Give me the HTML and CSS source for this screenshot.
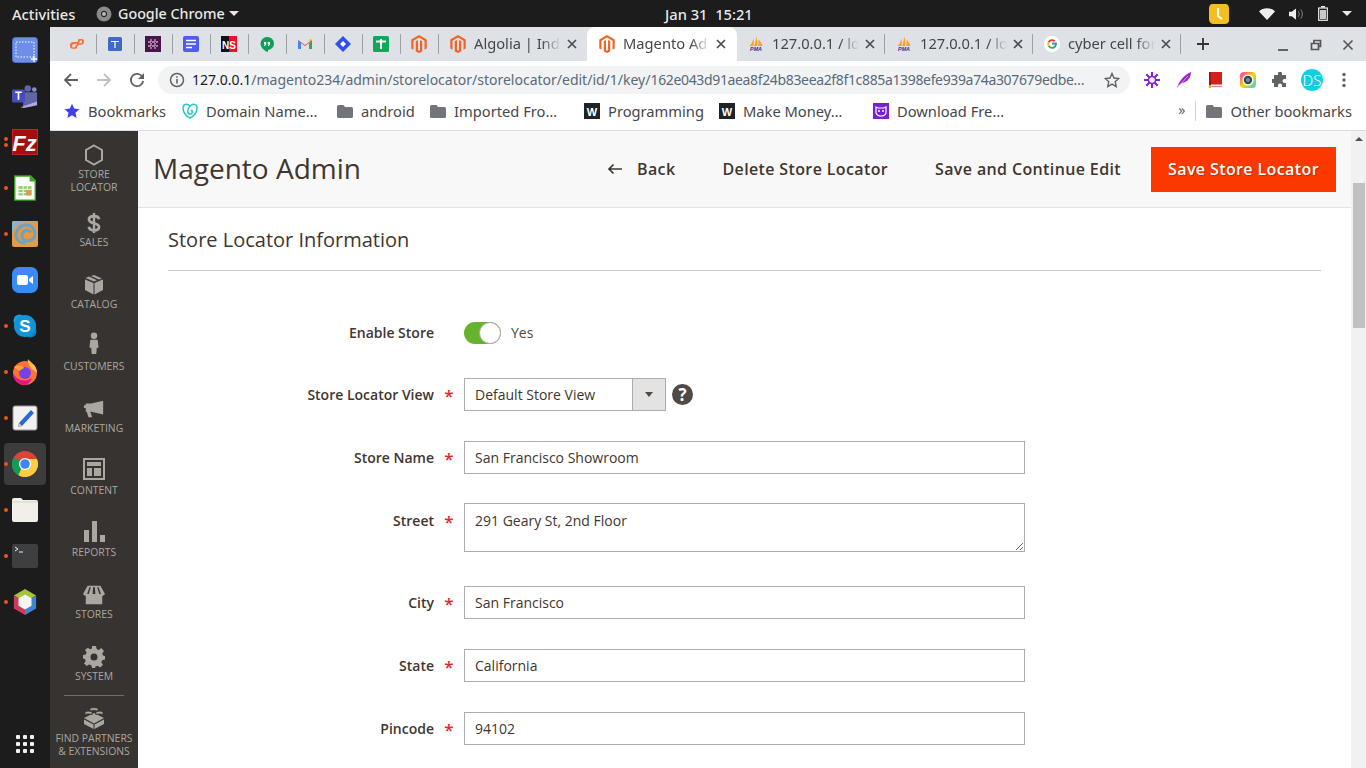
FILE: index.html
```html
<!DOCTYPE html>
<html lang="en">
<head>
<meta charset="utf-8">
<title>Magento Admin</title>
<link rel="stylesheet" href="styles.css">
</head>
<body>
<svg class="defs" width="0" height="0" aria-hidden="true">
  <symbol id="mage" viewBox="0 0 24 28"><path fill="#f26322" d="M12 0 0 7v14l3.400 2V9l8.600-5 8.600 5v14l3.400-2V7z"/><path fill="#f26322" d="M13.600 7.900v15.700L12 24.600l-1.600-1V7.900L7 9.900V25.500l5 2.500 5-2.500V9.900z"/></symbol>
  <symbol id="x" viewBox="0 0 12 12"><path d="M2 2l8 8M10 2l-8 8" stroke="#4a4d51" stroke-width="1.700" fill="none"/></symbol>
  <symbol id="folder" viewBox="0 0 16 14"><path fill="#72767a" d="M1.500 1h5l1.500 2h6.500A1.500 1.500 0 0 1 16 4.500V12.500A1.500 1.500 0 0 1 14.500 14H1.500A1.500 1.500 0 0 1 0 12.500V2.500A1.500 1.500 0 0 1 1.500 1z"/></symbol>
</svg>

<header class="topbar">
  <div class="top-left">
    <span class="activities">Activities</span>
    <svg class="top-chrome" viewBox="0 0 16 16"><circle cx="8" cy="8" r="7.500" fill="#8a8a8a"/><circle cx="8" cy="8" r="3" fill="#1c1c1c"/><circle cx="8" cy="8" r="2" fill="#bbb"/></svg>
    <span class="appname">Google Chrome</span>
    <span class="caret"></span>
  </div>
  <div class="clock">Jan 31&nbsp; 15:21</div>
  <div class="tray">
    <svg class="tray-clock" viewBox="0 0 22 22"><path fill="#f2c01e" d="M5 1h12c3 0 4 2 4 5v11c0 3-2 4-5 4H6c-3 0-5-2-5-5V6c0-3 1-5 4-5z"/><path d="M10 5v8l4 3" stroke="#fff" stroke-width="2" fill="none"/></svg>
    <svg class="tray-wifi" viewBox="0 0 16 12"><path fill="#eee" d="M0 3.500C4-.9 12-.9 16 3.500L8 12z"/></svg>
    <svg class="tray-vol" viewBox="0 0 16 14"><path fill="#eee" d="M0 4.500h3L7.500 1v12L3 9.500H0z"/><path d="M10 4q2 3 0 6M12.500 2q3.500 5 0 10" stroke="#888" fill="none"/></svg>
    <svg class="tray-bat" viewBox="0 0 10 15"><path d="M3 0h4v1.500H3z" fill="#eee"/><rect x=".7" y="2" width="8.600" height="12.300" fill="none" stroke="#eee" stroke-width="1.200"/><rect x="2" y="4" width="6" height="9" fill="#c9c9c9"/></svg>
    <span class="caret"></span>
  </div>
</header>

<div class="desktop">
  <nav class="dock">
    <div class="dock-item"><svg class="dock-icon" viewBox="0 0 26 26"><rect x=".5" y=".5" width="25" height="25" rx="3" fill="#6f8ee8" stroke="#4e6fd0"/><rect x="4" y="5" width="18" height="15" fill="none" stroke="#fff" stroke-dasharray="1.500 1.500"/><path d="M19 22h6M22 19v6" stroke="#fff" stroke-width="1.300"/></svg></div>
    <div class="dock-item"><svg class="dock-icon" viewBox="0 0 28 28"><circle cx="17" cy="6" r="3.500" fill="#6264a7"/><circle cx="24" cy="7" r="2.500" fill="#8b8cc7"/><path d="M12 10h15v11l-5 4-10 1z" fill="#6264a7"/><path d="M9 26l18-6v4l-14 3z" fill="#b6a7e0"/><rect x="0" y="7" width="14" height="14" rx="1.500" fill="#464eb8"/><path d="M3.500 10h7M7 10v8" stroke="#fff" stroke-width="1.800"/></svg></div>
    <div class="dock-item has-dot double-dot"><svg class="dock-icon" viewBox="0 0 26 26"><rect width="26" height="26" fill="#a30f0f"/><rect x=".5" y=".5" width="25" height="25" fill="none" stroke="#e04040" stroke-dasharray="1 1"/><text x="12.500" y="21.500" class="fz-text">Fz</text></svg></div>
    <div class="dock-item has-dot"><svg class="dock-icon" viewBox="0 0 26 28"><path d="M2 1h17l5 5v21H2z" fill="#fff" stroke="#3aa51e" stroke-width="1.500"/><path d="M18 0l7 7h-7z" fill="#3aa51e"/><rect x="6" y="12" width="14" height="10" fill="#8fce7a"/><path d="M6 15.500h14M6 19h14M11 12v10M15.500 12v10" stroke="#fff"/><rect x="14" y="16" width="6" height="6" fill="#d99a4e"/></svg></div>
    <div class="dock-item has-dot"><svg class="dock-icon" viewBox="0 0 26 26"><rect width="26" height="26" rx="2" fill="#e79a46"/><path d="M0 13C2 3 12 0 26 1V0H2Q0 0 0 2z" fill="#8fb3cc"/><path d="M13 22c-7 0-11-6-8-12s11-8 15-4 4 11-1 13-10 0-9-5 6-6 9-3" fill="none" stroke="#6aa2c9" stroke-width="3"/></svg></div>
    <div class="dock-item"><svg class="dock-icon" viewBox="0 0 26 26"><rect width="26" height="26" rx="7" fill="#3a8bf7"/><rect x="5" y="8" width="11" height="10" rx="2" fill="#fff"/><path d="M17 12l4-3v8l-4-3z" fill="#fff"/></svg></div>
    <div class="dock-item has-dot"><svg class="dock-icon" viewBox="0 0 26 26"><circle cx="7.500" cy="7.500" r="6" fill="#1b9ed9"/><circle cx="18.500" cy="18.500" r="6" fill="#0f7fc4"/><circle cx="13" cy="13" r="11" fill="#1394d8"/><text x="13" y="19" class="sk-text">S</text></svg></div>
    <div class="dock-item has-dot"><svg class="dock-icon" viewBox="0 0 26 26"><circle cx="13" cy="14" r="12" fill="#ff7139"/><path d="M13 26a12 12 0 0 1-12-12c3 7 12 10 19 5-2 4-4 7-7 7z" fill="#e31587"/><circle cx="13" cy="14" r="6" fill="#7542e5"/><path d="M16 0c2 3 9 6 9 14l-6-5c-1-3-4-5-3-9z" fill="#ffbd4f"/><path d="M2 8c3-2 8-2 10 1l-5 3z" fill="#ffa436"/></svg></div>
    <div class="dock-item has-dot"><svg class="dock-icon" viewBox="0 0 26 26"><rect x="1" y="1" width="24" height="24" rx="2" fill="#f2f2f2" stroke="#999"/><path d="M7 18L19 5l3 3L10 21l-4 1z" fill="#2a6ad8"/><path d="M6 22l1-4 3 3z" fill="#e8c38a"/></svg></div>
    <div class="dock-item has-dot active"><svg class="dock-icon" viewBox="0 0 26 26"><circle cx="13" cy="13" r="13" fill="#db4437"/><path d="M1.700 6.500 13 13l-6.500 11.300A13 13 0 0 1 1.700 6.500z" fill="#0f9d58"/><path d="M25 8H13l-6.500 16.300A13 13 0 0 0 25 8z" fill="#ffcd40"/><circle cx="13" cy="13" r="6" fill="#fff"/><circle cx="13" cy="13" r="4.800" fill="#4285f4"/></svg></div>
    <div class="dock-item has-dot"><svg class="dock-icon" viewBox="0 0 26 24"><path d="M2 0h7l2 2h13q2 0 2 2v18q0 2-2 2H2q-2 0-2-2V2q0-2 2-2z" fill="#f1efe8"/><path d="M0 4h26" stroke="#d6d3c9"/></svg></div>
    <div class="dock-item has-dot"><svg class="dock-icon" viewBox="0 0 26 24"><rect width="26" height="24" rx="2" fill="#3d3f41"/><path d="M3 3l3 2-3 2M7 8h4" stroke="#eee" fill="none"/></svg></div>
    <div class="dock-item has-dot"><svg class="dock-icon" viewBox="0 0 24 28"><path d="M12 0l12 7-12 7L0 7z" fill="#a5c33b"/><path d="M0 7l12 7v14L0 21z" fill="#cc3b5a"/><path d="M24 7L12 14v14l12-7z" fill="#3d85d3"/><path d="M12 6l7 4v8l-7 4-7-4v-8z" fill="#f5f5f0"/></svg></div>
    <div class="dock-apps"><span></span><span></span><span></span><span></span><span></span><span></span><span></span><span></span><span></span></div>
  </nav>

  <div class="browser">
    <div class="tabstrip">
      <div class="pinned">
        <svg class="favicon" viewBox="0 0 16 16"><path d="M1 9.500Q1 6 4.500 6H9l-2 2H5q-2 0-2 2t2 1.500l1-.2.500-1.500h2l-1 3H4Q1 13 1 9.500zM7 10l2.500-7h3q3 0 2.500 3T11 9H9.500l.5-1.500h1.500q1.500 0 1.700-1.500T12 4.500h-1L9 10z" fill="#ff6c2c"/></svg>
      </div>
      <div class="pinned"><svg class="favicon" viewBox="0 0 16 16"><rect x="1" y="1" width="14" height="14" rx="1.500" fill="#3f6ac8"/><path d="M4 5.500h8M8 5.500V12" stroke="#fff" stroke-width="1.200"/></svg></div>
      <div class="pinned"><svg class="favicon" viewBox="0 0 16 16"><rect width="16" height="16" fill="#4a154b"/><path d="M6 3v10M10 3v10M3 6h10M3 10h10" stroke="#a77ea8" stroke-width="1.800" stroke-dasharray="3 1"/></svg></div>
      <div class="pinned"><svg class="favicon" viewBox="0 0 16 16"><rect width="16" height="16" rx="2" fill="#4f5cf0"/><path d="M3 4.500h10M3 8h10M3 11.500h6" stroke="#fff" stroke-width="1.600"/></svg></div>
      <div class="pinned"><svg class="favicon" viewBox="0 0 16 16"><rect width="16" height="16" fill="#111"/><rect x="8" width="8" height="16" fill="#e8132b"/><text x="8" y="12.500" class="ns-text">NS</text></svg></div>
      <div class="pinned"><svg class="favicon" viewBox="0 0 16 16"><path d="M8 1a6.500 6.500 0 0 1 1 13v2C5 15 1.500 11 1.500 7.500A6.500 6.500 0 0 1 8 1z" fill="#0f9d58"/><path d="M5 6h2.200v2.500L6 10H5l.8-1.800H5zM8.800 6H11v2.500L9.800 10h-1l.8-1.800h-.8z" fill="#fff"/></svg></div>
      <div class="pinned"><svg class="favicon" viewBox="0 0 16 16"><path d="M1 13V4l7 5 7-5v9h-3V7L8 10 4 7v6z" fill="#ea4335"/><path d="M1 13V4l3 3v6z" fill="#4285f4"/><path d="M15 13V4l-3 3v6z" fill="#34a853"/><path d="M12 7l3-3-1.500-1.300L12 4z" fill="#fbbc04"/></svg></div>
      <div class="pinned"><svg class="favicon" viewBox="0 0 16 16"><path d="M8 0l8 8-8 8-8-8z" fill="#2f4ef0"/><path d="M8 5l3 3-3 3-3-3z" fill="#fff"/></svg></div>
      <div class="pinned"><svg class="favicon" viewBox="0 0 16 16"><rect width="16" height="16" rx="1.500" fill="#0fa958"/><path d="M3 5.500h10M8 3v10" stroke="#fff" stroke-width="2"/></svg></div>
      <div class="pinned"><svg class="favicon mage-fav"><use href="#mage"/></svg></div>
      <div class="tab before-active">
        <svg class="favicon mage-fav"><use href="#mage"/></svg><span class="tab-title">Algolia | Inde</span><svg class="tab-x"><use href="#x"/></svg>
      </div>
      <div class="tab tab-active">
        <svg class="favicon mage-fav"><use href="#mage"/></svg><span class="tab-title">Magento Ad</span><svg class="tab-x"><use href="#x"/></svg>
      </div>
      <div class="tab">
        <svg class="favicon" viewBox="0 0 24 24"><path fill="#f5a623" d="M2 15C5 13 7 8 8 4c1 3 1 8 0 11zM9 15c2-4 3-9 3-14 2 4 3 9 2 14zM15 15c1-3 1-7 1-10 2 3 5 7 6 10z"/><text x="12" y="23" class="pma-text">PMA</text></svg><span class="tab-title">127.0.0.1 / lo</span><svg class="tab-x"><use href="#x"/></svg>
      </div>
      <div class="tab">
        <svg class="favicon" viewBox="0 0 24 24"><path fill="#f5a623" d="M2 15C5 13 7 8 8 4c1 3 1 8 0 11zM9 15c2-4 3-9 3-14 2 4 3 9 2 14zM15 15c1-3 1-7 1-10 2 3 5 7 6 10z"/><text x="12" y="23" class="pma-text">PMA</text></svg><span class="tab-title">127.0.0.1 / lo</span><svg class="tab-x"><use href="#x"/></svg>
      </div>
      <div class="tab">
        <svg class="favicon" viewBox="0 0 16 16"><circle cx="8" cy="8" r="8" fill="#fff"/><path d="M8 6.800h4.700A4.800 4.800 0 0 1 8 12.800a4.800 4.800 0 0 1-4.200-2.500l1.500-1A3 3 0 0 0 11 8.500H8z" fill="#34a853"/><path d="M3.800 10.300a4.800 4.800 0 0 1 0-4.600l1.500 1a3 3 0 0 0 0 2.600z" fill="#fbbc04"/><path d="M3.800 5.700A4.800 4.800 0 0 1 11.300 4.600L10 5.900a3 3 0 0 0-4.700.8z" fill="#ea4335"/><path d="M8 6.800h4.700l.1 1.500H8z" fill="#4285f4"/></svg><span class="tab-title">cyber cell for</span><svg class="tab-x"><use href="#x"/></svg>
      </div>
      <svg class="newtab" viewBox="0 0 12 12"><path d="M6 0v12M0 6h12" stroke="#333" stroke-width="1.800"/></svg>
      <div class="winctl">
        <svg viewBox="0 0 12 12"><path d="M1 11h10" stroke="#555" stroke-width="1.800"/></svg>
        <svg viewBox="0 0 12 12"><path d="M1.500 4.500h7v6h-7zM4 4.500V1.500h6.500v6H8.500" stroke="#555" stroke-width="1.700" fill="none"/></svg>
        <svg viewBox="0 0 12 12"><path d="M1.500 1.500l9 9M10.500 1.500l-9 9" stroke="#555" stroke-width="1.600"/></svg>
      </div>
    </div>

    <div class="toolbar">
      <div class="navbtns">
        <svg viewBox="0 0 16 16"><path d="M15 8H2M8 2L2 8l6 6" stroke="#5f6368" stroke-width="1.800" fill="none"/></svg>
        <svg viewBox="0 0 16 16"><path d="M1 8h13M8 2l6 6-6 6" stroke="#bdc1c6" stroke-width="1.800" fill="none"/></svg>
        <svg viewBox="0 0 16 16"><path d="M13.500 5A6.200 6.200 0 1 0 14.200 9" stroke="#5f6368" stroke-width="1.800" fill="none"/><path d="M15 1v6H9z" fill="#5f6368"/></svg>
      </div>
      <div class="omnibox">
        <svg class="info" viewBox="0 0 16 16"><circle cx="8" cy="8" r="6.500" fill="none" stroke="#5f6368" stroke-width="1.500"/><path d="M8 7v4.500M8 4.200v1.600" stroke="#5f6368" stroke-width="1.600"/></svg>
        <span class="url"><b>127.0.0.1</b>/magento234/admin/storelocator/storelocator/edit/id/1/key/<span class="url-hash">162e043d91aea8f24b83eea2f8f1c885a1398efe939a74a307679edbe…</span></span>
        <svg class="star" viewBox="0 0 16 16"><path d="M8 1.500l2 4.500 4.800.5-3.600 3.200 1 4.800L8 12.100l-4.200 2.400 1-4.800L1.200 6.500 6 6z" fill="none" stroke="#5f6368" stroke-width="1.400"/></svg>
      </div>
      <div class="extensions">
        <svg viewBox="0 0 16 16"><g stroke="#8a1be2" stroke-width="2"><path d="M8 0v16M0 8h16M2.300 2.300l11.400 11.400M13.700 2.300L2.300 13.700"/></g><circle cx="8" cy="8" r="3.500" fill="#fff" stroke="#8a1be2" stroke-width="1.500"/></svg>
        <svg viewBox="0 0 16 16"><path d="M1 16C3 9 8 3 15 0c0 5-3 10-9 11l-3 2z" fill="#a026c8"/><path d="M1 16L12 4" stroke="#e4b6f2" stroke-width=".8"/></svg>
        <svg viewBox="0 0 16 16"><rect x="1" width="13" height="15" fill="#d71e1e"/><rect x="1" y="12.500" width="14" height="2" fill="#eee"/><rect x="1" width="2" height="16" fill="#a01515"/><circle cx="2" cy="14.500" r="1.500" fill="#e8c21e"/></svg>
        <svg viewBox="0 0 16 16"><defs><linearGradient id="rb" x1="0" y1="0" x2="1" y2="1"><stop offset="0" stop-color="#ff2bc2"/><stop offset=".5" stop-color="#ffd400"/><stop offset="1" stop-color="#22d3ee"/></linearGradient></defs><rect width="16" height="16" rx="4" fill="url(#rb)"/><circle cx="8" cy="8" r="5.500" fill="#fff"/><circle cx="8" cy="8" r="4.200" fill="#37474f"/><circle cx="8" cy="8" r="2" fill="#78909c"/></svg>
        <svg viewBox="0 0 16 16"><path fill="#5f6368" d="M6 1.500a2 2 0 0 1 4 0V3h4v4h-1.500a2 2 0 0 0 0 4H14v4h-4v-1.500a2 2 0 0 0-4 0V15H2v-4H.5a2 2 0 0 1 0-4H2V3h4z"/></svg>
        <span class="avatar">DS</span>
        <svg viewBox="0 0 16 16"><circle cx="8" cy="2.500" r="1.700" fill="#5f6368"/><circle cx="8" cy="8" r="1.700" fill="#5f6368"/><circle cx="8" cy="13.500" r="1.700" fill="#5f6368"/></svg>
      </div>
    </div>

    <div class="bookmarks">
      <div class="bm-grid">
        <span class="bm"><svg viewBox="0 0 16 16"><path d="M8 .8l2.200 4.800 5.200.6-3.900 3.500 1.100 5.200L8 12.300l-4.600 2.600 1.100-5.200L.6 6.200l5.200-.6z" fill="#4040e8"/></svg>Bookmarks</span>
        <span class="bm"><svg viewBox="0 0 16 16"><path d="M8 3C5 0 1 1 1 5c0 5 4 9 7 10 3-1 7-5 7-10 0-4-4-5-7-2zM8 3C5 6 5 11 8 11s3-3 1-4" fill="none" stroke="#2bc4c4" stroke-width="1.500"/></svg>Domain Name…</span>
        <span class="bm"><svg><use href="#folder"/></svg>android</span>
        <span class="bm"><svg><use href="#folder"/></svg>Imported Fro…</span>
        <span class="bm"><svg viewBox="0 0 16 16"><rect width="16" height="16" fill="#1d2327"/><text x="8" y="12.500" class="w-text">W</text></svg>Programming</span>
        <span class="bm"><svg viewBox="0 0 16 16"><rect width="16" height="16" fill="#1d2327"/><text x="8" y="12.500" class="w-text">W</text></svg>Make Money…</span>
        <span class="bm"><svg viewBox="0 0 16 16"><rect width="16" height="16" fill="#7a1fd8"/><path d="M3 4l2 1h6l2-1v6q-1 3-5 3t-5-3z" fill="none" stroke="#fff" stroke-width="1.200"/><circle cx="6" cy="8" r="1" fill="#fff"/><circle cx="10" cy="8" r="1" fill="#fff"/></svg>Download Fre…</span>
      </div>
      <div class="bm-right">
        <span class="bm-more">»</span>
        <span class="bm"><svg><use href="#folder"/></svg>Other bookmarks</span>
      </div>
    </div>

    <div class="viewport">
      <aside class="adminmenu">
        <div class="menu-item m-first"><svg viewBox="0 0 20 22"><path d="M10 1.500l8 4.500v10l-8 4.500L2 16V6z" fill="none" stroke="#aaa6a0" stroke-width="2"/></svg><span>Store<br>Locator</span></div>
        <div class="menu-item"><svg class="icon-dollar" viewBox="0 0 16 24"><path d="M13.500 8C13 5 10.500 4.500 8 4.500S2.500 5.500 2.500 8.200c0 5.300 11 2.800 11 8.200 0 2.600-2.800 3.600-5.500 3.600s-5.200-.8-5.700-3.800" fill="none" stroke="#aaa6a0" stroke-width="3"/><path d="M8 1v22" stroke="#aaa6a0" stroke-width="2.600"/></svg><span>Sales</span></div>
        <div class="menu-item"><svg viewBox="0 0 20 22"><path fill="#aaa6a0" d="M10 1l-3 1 8 3.500L18 4.500zM5 2.600L1.500 4 10 7.500 13 6.200zM1 5.500V16l8.500 4.500V9zM19 5.500L10.500 9v11.500L19 16z"/></svg><span>Catalog</span></div>
        <div class="menu-item"><svg class="icon-person" viewBox="0 0 20 24"><circle cx="10" cy="4" r="3.500" fill="#aaa6a0"/><path fill="#aaa6a0" d="M6 8.500h8l1 8.500-2 .5-.5 6.500h-5L7 17.500 5 17z"/></svg><span>Customers</span></div>
        <div class="menu-item"><svg viewBox="0 0 24 20"><path fill="#aaa6a0" d="M22 1v15L9 13H8l2 6H6l-2-6H3V9H1V6h2V4h6z"/></svg><span>Marketing</span></div>
        <div class="menu-item"><svg class="icon-up" viewBox="0 0 22 22"><path fill="#aaa6a0" fill-rule="evenodd" d="M0 0h22v22H0zM2 2v18h18V2zM4 4h14v4H4zM4 10h5v8H4zM11 10h7v8h-7z"/></svg><span>Content</span></div>
        <div class="menu-item"><svg class="icon-up" viewBox="0 0 22 22"><path fill="#aaa6a0" d="M1 10h5v12H1zM9 1h5v21H9zM17 15h5v7h-5z"/></svg><span>Reports</span></div>
        <div class="menu-item"><svg viewBox="0 0 24 20"><path fill="#aaa6a0" d="M5 0h14l5 9q-1 2-3 2v9H3v-9q-2 0-3-2zM7 1.500 4.500 9h1.800L8.500 1.500zM11 1.500 10.500 9h3L13 1.500zM15.500 1.500 17.700 9h1.800L17 1.500z"/></svg><span>Stores</span></div>
        <div class="menu-item"><svg viewBox="0 0 22 22"><path fill="#aaa6a0" fill-rule="evenodd" d="M9 0h4l.6 3 2.200.9L18.400 2 21 5l-1.800 2.400.8 2.100L22 10v3.500l-2.800.7-.9 2.100L20 19l-3 2.500-2.400-1.800-2.100.8L12 22H9l-.7-2.700-2.100-.8L3.800 20 1 17.500l1.700-2.400-.8-2L0 12.500V9l2.800-.6.8-2.100L2 4l2.800-2.300L7 3.300l2-.8zM11 7.500a3.500 3.500 0 1 0 0 7 3.500 3.500 0 0 0 0-7z"/></svg><span>System</span></div>
        <div class="menu-sep"></div>
        <div class="menu-item m-last"><svg viewBox="0 0 22 22"><path fill="#aaa6a0" d="M1 12.500l9.500 5V22L1 17zM21 12.500l-9.500 5V22l9.500-5zM11 6l10 5-10 5.500L1 11z"/><path fill="#aaa6a0" stroke="#373330" stroke-width=".8" d="M7 4.500C7 3 15 3 15 4.500V1.800C15 .3 7 .3 7 1.800zM2 8C2 6.500 9 6.500 9 8V5.300C9 3.800 2 3.800 2 5.300zM13 8c0-1.500 7-1.500 7 0V5.300C20 3.800 13 3.800 13 5.300z"/></svg><span>Find Partners<br>&amp; Extensions</span></div>
      </aside>

      <main class="page">
        <div class="page-head">
          <h1 class="page-title">Magento Admin</h1>
          <div class="page-actions">
            <span class="act act-back"><svg viewBox="0 0 16 12"><path d="M15 6H2M6.500 1.500 2 6l4.500 4.500" stroke="#41362f" stroke-width="1.700" fill="none"/></svg>Back</span>
            <span class="act act-del">Delete Store Locator</span>
            <span class="act act-cont">Save and Continue Edit</span>
            <button class="primary">Save Store Locator</button>
          </div>
        </div>
        <section class="content">
          <h2 class="section-title">Store Locator Information</h2>
          <div class="form">
            <label class="f-label f-toggle-label">Enable Store</label>
            <span class="f-req f-toggle-label"></span>
            <div class="f-control toggle-row"><span class="toggle"><span class="knob"></span></span><span class="toggle-text">Yes</span></div>

            <label class="f-label">Store Locator View</label>
            <span class="f-req">*</span>
            <div class="f-control select-row">
              <div class="select"><span class="select-val">Default Store View</span><span class="select-arrow"><i></i></span></div>
              <span class="help">?</span>
            </div>

            <label class="f-label">Store Name</label>
            <span class="f-req">*</span>
            <div class="f-control"><input class="input" type="text" value="San Francisco Showroom"></div>

            <label class="f-label">Street</label>
            <span class="f-req">*</span>
            <div class="f-control"><textarea class="input area">291 Geary St, 2nd Floor</textarea></div>

            <label class="f-label">City</label>
            <span class="f-req">*</span>
            <div class="f-control"><input class="input" type="text" value="San Francisco"></div>

            <label class="f-label">State</label>
            <span class="f-req">*</span>
            <div class="f-control"><input class="input" type="text" value="California"></div>

            <label class="f-label">Pincode</label>
            <span class="f-req">*</span>
            <div class="f-control"><input class="input" type="text" value="94102"></div>
          </div>
        </section>
      </main>

      <div class="scrollbar">
        <span class="sb-up"></span>
        <span class="sb-thumb"></span>
      </div>
    </div>
  </div>
</div>
</body>
</html>
```

FILE: styles.css
```css
* { box-sizing: border-box; }
html, body { margin: 0; height: 768px; overflow: hidden; }
body { font-family: "Noto Sans", sans-serif; background: #1c1c1c; width: 1366px; }
.defs { display: block; height: 0; }
.pma-text { font: italic bold 8px "Liberation Sans", sans-serif; fill: #3a2d8f; text-anchor: middle; }
.fz-text { font: italic bold 22px "Liberation Sans", sans-serif; fill: #fff; text-anchor: middle; }
.sk-text { font: bold 17px "Liberation Sans", sans-serif; fill: #fff; text-anchor: middle; }
.ns-text { font: bold 10px "Liberation Sans", sans-serif; fill: #fff; text-anchor: middle; }
.w-text { font: bold 11px "Liberation Sans", sans-serif; fill: #fff; text-anchor: middle; }

/* Top bar */
.topbar { height: 27px; display: flex; align-items: center; background: #1c1c1c; color: #e8e8e8; font-size: 14.7px; font-weight: 500; }
.top-left { width: 665px; display: flex; align-items: center; padding-left: 12px; }
.activities { width: 84px; }
.top-chrome { width: 16px; height: 16px; margin-right: 6px; }
.appname { width: 111px; white-space: nowrap; font-size: 14.300px; }
.caret { width: 0; height: 0; border-left: 5px solid transparent; border-right: 5px solid transparent; border-top: 5px solid #e8e8e8; }
.clock { width: 95px; white-space: nowrap; }
.tray { display: flex; align-items: center; margin-left: auto; padding-right: 14px; }
.tray-clock { width: 22px; height: 22px; margin-right: 29px; }
.tray-wifi { width: 16px; height: 12px; margin-right: 14px; }
.tray-vol { width: 15px; height: 14px; margin-right: 14px; }
.tray-bat { width: 10px; height: 15px; margin-right: 14px; }

.desktop { display: flex; height: 741px; }

/* Dock */
.dock { width: 50px; display: flex; flex-direction: column; align-items: center; flex: none; }
.dock-item { width: 42px; height: 46px; flex: none; display: flex; align-items: center; justify-content: center; position: relative; }
.dock-icon { width: 26px; height: 26px; }
.dock-item.active { background: #3c3c3c; border-radius: 4px; height: 42px; margin: 2px 0; }
.has-dot::before { content: ""; position: absolute; left: 0; top: 21px; width: 4px; height: 4px; border-radius: 50%; background: #e95420; }
.active::before { top: 19px; }
.double-dot::before { top: 18px; box-shadow: 0 6px 0 #e95420; }
.dock-apps { margin-top: auto; margin-bottom: 15px; display: grid; grid-template-columns: repeat(3, 4px); gap: 3px; }
.dock-apps span { width: 4px; height: 4px; background: #f0f0f0; border-radius: 1px; }

/* Browser */
.browser { flex: 1; display: flex; flex-direction: column; background: #fff; min-width: 0; }
.tabstrip { height: 34px; background: #dee1e6; display: flex; align-items: stretch; padding-left: 9px; flex: none; }
.pinned { width: 38px; display: flex; align-items: center; justify-content: center; position: relative; padding: 0 2px 1px 0; }
.pinned::after, .tab::after { content: ""; position: absolute; right: 0; top: 7px; height: 20px; width: 1px; background: #9aa0a6; }
.favicon { width: 16px; height: 16px; flex: none; }
.mage-fav { width: 16px; height: 18px; }
.tab { width: 148px; display: flex; align-items: center; padding: 0 0 1px 11px; position: relative; font-size: 14.700px; color: #45474b; flex: none; }
.before-active::after { display: none; }
.tab-active { width: 150px; background: #fff; border-radius: 8px 8px 0 0; padding-left: 12px; }
.tab-active::after { display: none; }
.tab-title { margin: 0 0 2px 8px; width: 87px; white-space: nowrap; overflow: hidden; -webkit-mask-image: linear-gradient(90deg, #000 78%, transparent 100%); mask-image: linear-gradient(90deg, #000 78%, transparent 100%); }
.tab-x { width: 12px; height: 12px; margin-left: 5px; flex: none; }
.newtab { width: 12px; height: 12px; margin: 11px 0 0 16px; flex: none; }
.winctl { margin-left: auto; display: flex; align-items: center; gap: 20.500px; padding-right: 12px; padding-top: 1px; }
.winctl svg { width: 12px; height: 12px; }

.toolbar { height: 34px; display: flex; align-items: center; flex: none; padding: 4px 0 1px 5px; background: #fff; }
.navbtns { display: flex; width: 103px; }
.navbtns svg { width: 16px; height: 16px; margin: 0 9px 0 8px; flex: none; }
.omnibox { width: 972px; height: 28px; background: #f1f3f4; border-radius: 14px; display: flex; align-items: center; padding: 0 10px 0 11px; flex: none; }
.info { width: 16px; height: 16px; flex: none; }
.url { flex: none; width: 893px; margin-left: 7px; font-size: 14px; color: #5b6a7a; white-space: nowrap; overflow: hidden; }
.url b { font-weight: 400; color: #202124; }
.url-hash { letter-spacing: -.35px; }
.star { width: 16px; height: 16px; margin-left: auto; flex: none; }
.extensions { display: flex; align-items: center; padding-left: 14px; gap: 16px; }
.extensions svg { width: 16px; height: 16px; flex: none; }
.avatar { width: 22px; height: 22px; margin: 0 -3px; border-radius: 50%; background: #0fd0e2; color: #fff; font-size: 15px; font-weight: 300; display: flex; align-items: center; justify-content: center; flex: none; }

.bookmarks { height: 36px; display: flex; align-items: center; padding: 0 0 3px 14px; font-size: 14.700px; color: #45474b; flex: none; background: #fff; border-bottom: 1px solid #dadce0; }
.bm-grid { display: grid; grid-template-columns: 118px 155px 93px 154px 135px 154px 130px; }
.bm { display: flex; align-items: center; gap: 8px; white-space: nowrap; }
.bm svg { width: 16px; height: 16px; flex: none; }
.bm-right { margin-left: auto; display: flex; align-items: center; padding-right: 14px; }
.bm-more { color: #5f6368; font-size: 14px; margin-right: 10px; padding-right: 10px; border-right: 1px solid #d0d2d6; height: 20px; line-height: 18px; }

/* Magento */
.viewport { flex: 1; display: flex; min-height: 0; overflow: hidden; }
.adminmenu { width: 88px; padding-top: 1px; background: #373330; flex: none; color: #aaa6a0; font-family: "Open Sans", sans-serif; font-size: 10.4px; display: flex; flex-direction: column; align-items: center; text-transform: uppercase; }
.menu-item { height: 62px; width: 100%; display: flex; flex-direction: column; align-items: center; text-align: center; line-height: 13px; flex: none; justify-content: flex-end; padding-bottom: 8px; gap: 2px; white-space: nowrap; }
.menu-item svg { width: 22px; height: 22px; flex: none; }
.menu-item .icon-person { margin-bottom: 4px; }
.menu-item .icon-up { margin-bottom: 2px; }
.menu-item .icon-dollar { width: 16px; height: 22px; margin-bottom: 0; }
.m-first { height: 63px; padding-bottom: 1px; }
.menu-sep { width: 60px; height: 1px; background: #736c67; margin-top: 4px; flex: none; }
.m-last { justify-content: flex-start; padding: 11px 0 0; gap: 3px; }

.page { flex: 1; min-width: 0; font-family: "Open Sans", sans-serif; color: #41362f; background: #fff; }
.page-head { height: 77px; background: #f8f8f8; border-bottom: 1px solid #e3e3e3; display: flex; align-items: center; padding: 0 15px 0 15px; }
.page-title { margin: 0 0 2px; font-size: 28px; font-weight: 400; color: #41362f; }
.page-actions { margin-left: auto; display: flex; align-items: center; font-size: 16px; font-weight: 600; color: #41362f; letter-spacing: .37px; }
.act { white-space: nowrap; }
.act-back { display: flex; align-items: center; gap: 14px; margin-right: 47px; }
.act-back svg { width: 16px; height: 12px; }
.act-del { margin-right: 47px; }
.act-cont { margin-right: 30px; }
.primary { width: 185px; height: 45px; border: 0; background: #fb3800; color: #fff; font: 600 16px "Open Sans", sans-serif; letter-spacing: .39px; text-shadow: 1px 1px 1px rgba(0,0,0,.25); }

.content { padding: 0 30px; }
.section-title { margin: 0; height: 63px; line-height: 64px; font-size: 20px; font-weight: 400; border-bottom: 1px solid #ccc; }
.form { display: grid; grid-template-columns: 266px 30px 561px; row-gap: 30px; padding-top: 50px; align-items: start; }
.f-label { text-align: right; font-size: 14px; font-weight: 600; line-height: 33px; color: #41362f; }
.f-req { color: #e22626; font-size: 17px; font-weight: 600; text-align: center; line-height: 36px; height: 33px; }
.f-toggle-label { line-height: 24px; height: 24px; }
.f-control { font-size: 14px; color: #41362f; min-height: 33px; }
.toggle-row { display: flex; align-items: center; min-height: 24px; height: 24px; gap: 10px; margin-bottom: 3px; }
.toggle { width: 37px; height: 22px; background: #66b32e; border-radius: 11px; display: flex; justify-content: flex-end; }
.knob { width: 22px; height: 22px; border-radius: 50%; background: #fff; border: 1px solid #adadad; }
.toggle-text { color: #514943; margin-bottom: 2px; }
.select-row { display: flex; align-items: center; gap: 6px; }
.select { width: 202px; height: 33px; border: 1px solid #adadad; display: flex; align-items: stretch; background: #fff; }
.select-val { flex: 1; padding-left: 10px; line-height: 31px; }
.select-arrow { width: 33px; background: #e3e3e3; border-left: 1px solid #adadad; display: flex; align-items: center; justify-content: center; }
.select-arrow i { width: 0; height: 0; border-left: 4px solid transparent; border-right: 4px solid transparent; border-top: 5px solid #514943; }
.help { width: 21px; height: 21px; border-radius: 50%; background: #514943; color: #fff; font-size: 17px; font-weight: 700; display: flex; align-items: center; justify-content: center; line-height: 1; }
.input { display: block; width: 561px; height: 33px; border: 1px solid #adadad; padding: 0 10px; font: 400 14px "Open Sans", sans-serif; color: #41362f; background: #fff; border-radius: 0; outline: 0; }
.area { height: 49px; padding: 7px 10px; resize: vertical; margin: -1px 0 4px; }

.scrollbar { width: 15px; background: #f1f1f1; flex: none; display: flex; flex-direction: column; align-items: center; }
.sb-up { width: 0; height: 0; margin-top: 6px; border-left: 4px solid transparent; border-right: 4px solid transparent; border-bottom: 4px solid #505050; flex: none; }
.sb-thumb { width: 12px; height: 145px; margin-top: 42px; background: #c1c1c1; flex: none; }
```
